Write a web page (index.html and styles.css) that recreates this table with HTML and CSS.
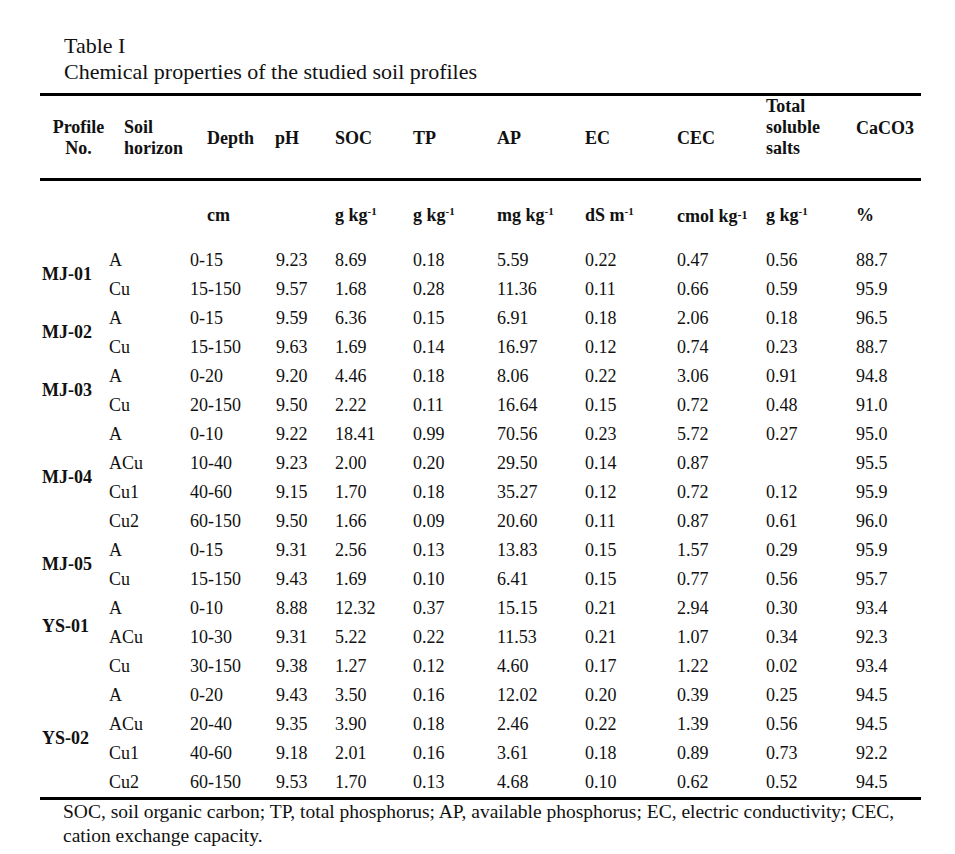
FILE: index.html
```html
<!DOCTYPE html>
<html lang="en">
<head>
<meta charset="utf-8">
<title>Table I</title>
<link rel="stylesheet" href="styles.css">
</head>
<body>
<div class="page">
  <div class="caption">
    <div class="cap-line">Table I</div>
    <div class="cap-line">Chemical properties of the studied soil profiles</div>
  </div>
  <table class="soil">
    <colgroup>
      <col class="c-prof"><col class="c-hor"><col class="c-depth"><col class="c-ph"><col class="c-soc"><col class="c-tp"><col class="c-ap"><col class="c-ec"><col class="c-cec"><col class="c-tss"><col class="c-caco">
    </colgroup>
    <thead>
      <tr class="head">
        <th class="h-prof">Profile<br>No.</th>
        <th class="h-hor">Soil<br>horizon</th>
        <th class="h-depth">Depth</th>
        <th class="h-ph">pH</th>
        <th>SOC</th>
        <th>TP</th>
        <th>AP</th>
        <th>EC</th>
        <th>CEC</th>
        <th class="h-tss">Total<br>soluble<br>salts</th>
        <th class="h-caco">CaCO3</th>
      </tr>
    </thead>
    <tbody>
      <tr class="units">
        <td></td>
        <td></td>
        <td class="h-depth">cm</td>
        <td class="ph"></td>
        <td>g kg<sup>-1</sup></td>
        <td>g kg<sup>-1</sup></td>
        <td>mg kg<sup>-1</sup></td>
        <td>dS m<sup>-1</sup></td>
        <td>cmol kg<span class="lowsup">-1</span></td>
        <td>g kg<sup>-1</sup></td>
        <td>%</td>
      </tr>
      <tr><td class="prof" rowspan="2">MJ-01</td><td>A</td><td>0-15</td><td class="ph">9.23</td><td>8.69</td><td>0.18</td><td>5.59</td><td>0.22</td><td>0.47</td><td>0.56</td><td>88.7</td></tr>
      <tr><td>Cu</td><td>15-150</td><td class="ph">9.57</td><td>1.68</td><td>0.28</td><td>11.36</td><td>0.11</td><td>0.66</td><td>0.59</td><td>95.9</td></tr>
      <tr><td class="prof" rowspan="2">MJ-02</td><td>A</td><td>0-15</td><td class="ph">9.59</td><td>6.36</td><td>0.15</td><td>6.91</td><td>0.18</td><td>2.06</td><td>0.18</td><td>96.5</td></tr>
      <tr><td>Cu</td><td>15-150</td><td class="ph">9.63</td><td>1.69</td><td>0.14</td><td>16.97</td><td>0.12</td><td>0.74</td><td>0.23</td><td>88.7</td></tr>
      <tr><td class="prof" rowspan="2">MJ-03</td><td>A</td><td>0-20</td><td class="ph">9.20</td><td>4.46</td><td>0.18</td><td>8.06</td><td>0.22</td><td>3.06</td><td>0.91</td><td>94.8</td></tr>
      <tr><td>Cu</td><td>20-150</td><td class="ph">9.50</td><td>2.22</td><td>0.11</td><td>16.64</td><td>0.15</td><td>0.72</td><td>0.48</td><td>91.0</td></tr>
      <tr><td class="prof" rowspan="4">MJ-04</td><td>A</td><td>0-10</td><td class="ph">9.22</td><td>18.41</td><td>0.99</td><td>70.56</td><td>0.23</td><td>5.72</td><td>0.27</td><td>95.0</td></tr>
      <tr><td>ACu</td><td>10-40</td><td class="ph">9.23</td><td>2.00</td><td>0.20</td><td>29.50</td><td>0.14</td><td>0.87</td><td></td><td>95.5</td></tr>
      <tr><td>Cu1</td><td>40-60</td><td class="ph">9.15</td><td>1.70</td><td>0.18</td><td>35.27</td><td>0.12</td><td>0.72</td><td>0.12</td><td>95.9</td></tr>
      <tr><td>Cu2</td><td>60-150</td><td class="ph">9.50</td><td>1.66</td><td>0.09</td><td>20.60</td><td>0.11</td><td>0.87</td><td>0.61</td><td>96.0</td></tr>
      <tr><td class="prof" rowspan="2">MJ-05</td><td>A</td><td>0-15</td><td class="ph">9.31</td><td>2.56</td><td>0.13</td><td>13.83</td><td>0.15</td><td>1.57</td><td>0.29</td><td>95.9</td></tr>
      <tr><td>Cu</td><td>15-150</td><td class="ph">9.43</td><td>1.69</td><td>0.10</td><td>6.41</td><td>0.15</td><td>0.77</td><td>0.56</td><td>95.7</td></tr>
      <tr><td class="prof prof-up" rowspan="3">YS-01</td><td>A</td><td>0-10</td><td class="ph">8.88</td><td>12.32</td><td>0.37</td><td>15.15</td><td>0.21</td><td>2.94</td><td>0.30</td><td>93.4</td></tr>
      <tr><td>ACu</td><td>10-30</td><td class="ph">9.31</td><td>5.22</td><td>0.22</td><td>11.53</td><td>0.21</td><td>1.07</td><td>0.34</td><td>92.3</td></tr>
      <tr><td>Cu</td><td>30-150</td><td class="ph">9.38</td><td>1.27</td><td>0.12</td><td>4.60</td><td>0.17</td><td>1.22</td><td>0.02</td><td>93.4</td></tr>
      <tr><td class="prof" rowspan="4">YS-02</td><td>A</td><td>0-20</td><td class="ph">9.43</td><td>3.50</td><td>0.16</td><td>12.02</td><td>0.20</td><td>0.39</td><td>0.25</td><td>94.5</td></tr>
      <tr><td>ACu</td><td>20-40</td><td class="ph">9.35</td><td>3.90</td><td>0.18</td><td>2.46</td><td>0.22</td><td>1.39</td><td>0.56</td><td>94.5</td></tr>
      <tr><td>Cu1</td><td>40-60</td><td class="ph">9.18</td><td>2.01</td><td>0.16</td><td>3.61</td><td>0.18</td><td>0.89</td><td>0.73</td><td>92.2</td></tr>
      <tr class="last"><td>Cu2</td><td>60-150</td><td class="ph">9.53</td><td>1.70</td><td>0.13</td><td>4.68</td><td>0.10</td><td>0.62</td><td>0.52</td><td>94.5</td></tr>
    </tbody>
  </table>
  <p class="note">SOC, soil organic carbon; TP, total phosphorus; AP, available phosphorus; EC, electric conductivity; CEC, cation exchange capacity.</p>
</div>
</body>
</html>
```

FILE: styles.css
```css
html, body {
  margin: 0;
  padding: 0;
  background: #ffffff;
}

body {
  font-family: "Liberation Serif", "Times New Roman", serif;
  color: #111111;
}

.page {
  padding: 33px 0 0 40px;
  width: 881px;
}

.caption {
  padding-left: 24px;
  font-size: 22px;
  line-height: 26px;
}

.soil {
  margin-top: 8px;
  width: 881px;
  border-collapse: collapse;
  table-layout: fixed;
  font-size: 18px;
}

.c-prof { width: 67px; }
.c-hor { width: 81px; }
.c-depth { width: 84px; }
.c-ph { width: 61px; }
.c-soc { width: 78px; }
.c-tp { width: 84px; }
.c-ap { width: 88px; }
.c-ec { width: 92px; }
.c-cec { width: 89px; }
.c-tss { width: 90px; }
.c-caco { width: 67px; }

.soil th,
.soil td {
  padding: 0 0 0 2px;
  text-align: left;
  white-space: nowrap;
}

.head {
  border-top: 3px solid #000;
  border-bottom: 3px solid #000;
  height: 85px;
}

.head th {
  font-weight: bold;
  line-height: 21px;
  vertical-align: middle;
  padding-top: 2px;
}

.soil .h-prof {
  text-align: center;
  padding-left: 10px;
}

.soil .h-hor { padding-left: 17px; }
.soil .h-depth { padding-left: 19px; }
.soil .ph { padding-left: 4px; }
.soil .h-ph { padding-left: 3px; }

.head .h-tss {
  vertical-align: top;
  padding-top: 0;
}

.head .h-caco {
  vertical-align: top;
  padding-top: 22px;
}

.units td {
  height: 66px;
  vertical-align: top;
  padding-top: 23px;
  line-height: 22px;
  font-weight: bold;
  box-sizing: border-box;
}

.soil sup {
  font-size: 11px;
  line-height: 0;
  vertical-align: 6px;
}

.lowsup {
  font-size: 12px;
  vertical-align: 3px;
}

.soil tbody tr:not(.units) td {
  height: 29px;
  line-height: 29px;
  vertical-align: middle;
}

.soil td.prof {
  font-weight: bold;
}

.soil td.prof-up {
  padding-bottom: 22px;
}

.soil tr.last {
  border-bottom: 3px solid #000;
}

.note {
  margin: 0;
  padding: 0 0 0 23px;
  font-size: 19.5px;
  line-height: 24px;
}
```
